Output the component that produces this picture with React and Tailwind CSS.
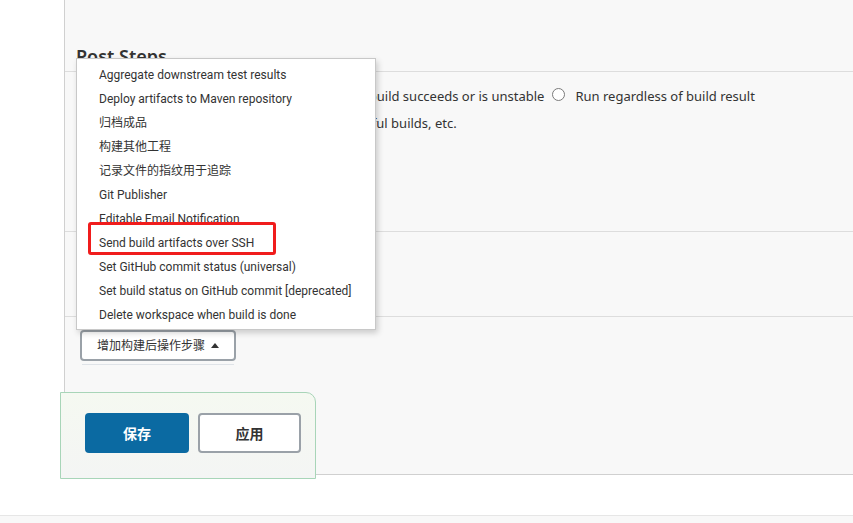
import React from "react";

const items = [
  "Aggregate downstream test results",
  "Deploy artifacts to Maven repository",
  "归档成品",
  "构建其他工程",
  "记录文件的指纹用于追踪",
  "Git Publisher",
  "Editable Email Notification",
  "Send build artifacts over SSH",
  "Set GitHub commit status (universal)",
  "Set build status on GitHub commit [deprecated]",
  "Delete workspace when build is done",
];

function Radio() {
  return <span className="inline-block w-[13px] h-[13px] rounded-full border border-[#7a7a7a] bg-white shrink-0" />;
}

export default function App() {
  return (
    <div
      className="relative w-[853px] h-[523px] overflow-hidden bg-white text-[#333]"
      style={{ fontFamily: '"Noto Sans", "Noto Sans CJK SC", sans-serif' }}
    >
      <div className="flex flex-col h-full">
        <div className="flex h-[475px]">
          <div className="w-[64px] shrink-0 bg-white" />
          <div className="flex-1 flex flex-col bg-[#f8f8f8] border-l border-b border-[#d0d0d0] rounded-bl-[6px]">
            {/* heading */}
            <div className="h-[72px] border-b border-[#dddddd] pl-[11px] pt-[44px]">
              <div className="text-[18px] font-semibold leading-[24px] text-[#333]">Post Steps</div>
            </div>
            {/* section radio */}
            <div className="h-[160px] border-b border-[#dddddd] pt-[14px] text-[13px]">
              <div className="pl-[25px] flex items-center gap-[9px] whitespace-nowrap leading-[20px]">
                <Radio />
                <span>Run only if build succeeds</span>
                <Radio />
                <span>Run only if build succeeds or is unstable</span>
                <span className="ml-[-1px]"><Radio /></span>
                <span className="ml-[1px]">Run regardless of build result</span>
              </div>
              <div className="pl-[15px] mt-[7px] leading-[20px] whitespace-nowrap">Should the post-build steps run only for successful builds, etc.</div>
            </div>
            {/* empty section */}
            <div className="h-[85px] border-b border-[#dddddd]" />
            {/* add button */}
            <div className="flex-1 pl-[15px] pt-[13px]">
              <div className="inline-flex flex-col">
                <button className="h-[31px] w-[156px] flex items-center justify-center gap-[6px] bg-white border-2 border-[#9aa1a8] rounded-[4px] text-[12px] text-[#333]">
                  <span>增加构建后操作步骤</span>
                  <svg width="8" height="5" viewBox="0 0 8 5"><path d="M0 5 L4 0 L8 5 Z" fill="#333" /></svg>
                </button>
                <div className="mt-[3px] mx-[2px] h-px bg-[#dfe3e8]" />
              </div>
            </div>
          </div>
        </div>
        <div className="h-[40px] bg-white" />
        <div className="flex-1 border-t border-[#e6e6e6] bg-[#f8f8f8]" />
      </div>

      {/* dropdown menu */}
      <div
        className="absolute left-[76px] top-[58px] w-[300px] bg-white border border-[#c8c8c8] shadow-[2px_3px_6px_rgba(0,0,0,0.18)] pt-[4px] pb-[2px]"
        style={{ fontFamily: 'Roboto, "Noto Sans CJK SC", sans-serif' }}
      >
        {items.map((t, i) => (
          <div key={i} className="relative h-[24px] flex items-center pl-[22px] text-[12px] whitespace-nowrap text-[#333]">
            {t}
            {i === 7 && (
              <div className="absolute left-[11px] top-[-9px] w-[188px] h-[33px] border-[3px] border-[#f01c1c] rounded-[3px]" />
            )}
          </div>
        ))}
      </div>

      {/* save bar */}
      <div className="absolute left-[60px] top-[392px] w-[256px] h-[87px] border border-[#a8d5b8] rounded-tr-[10px] bg-gradient-to-b from-[#f5f9f1] to-[#f4f5f4] flex items-start gap-[9px] pl-[24px] pt-[20px]">
        <button className="w-[104px] h-[40px] rounded-[4px] bg-[#0b6aa2] text-white text-[14px] font-bold">保存</button>
        <button className="w-[103px] h-[40px] rounded-[4px] bg-white border-2 border-[#9aa1a8] text-[#333] text-[14px] font-bold">应用</button>
      </div>
    </div>
  );
}
